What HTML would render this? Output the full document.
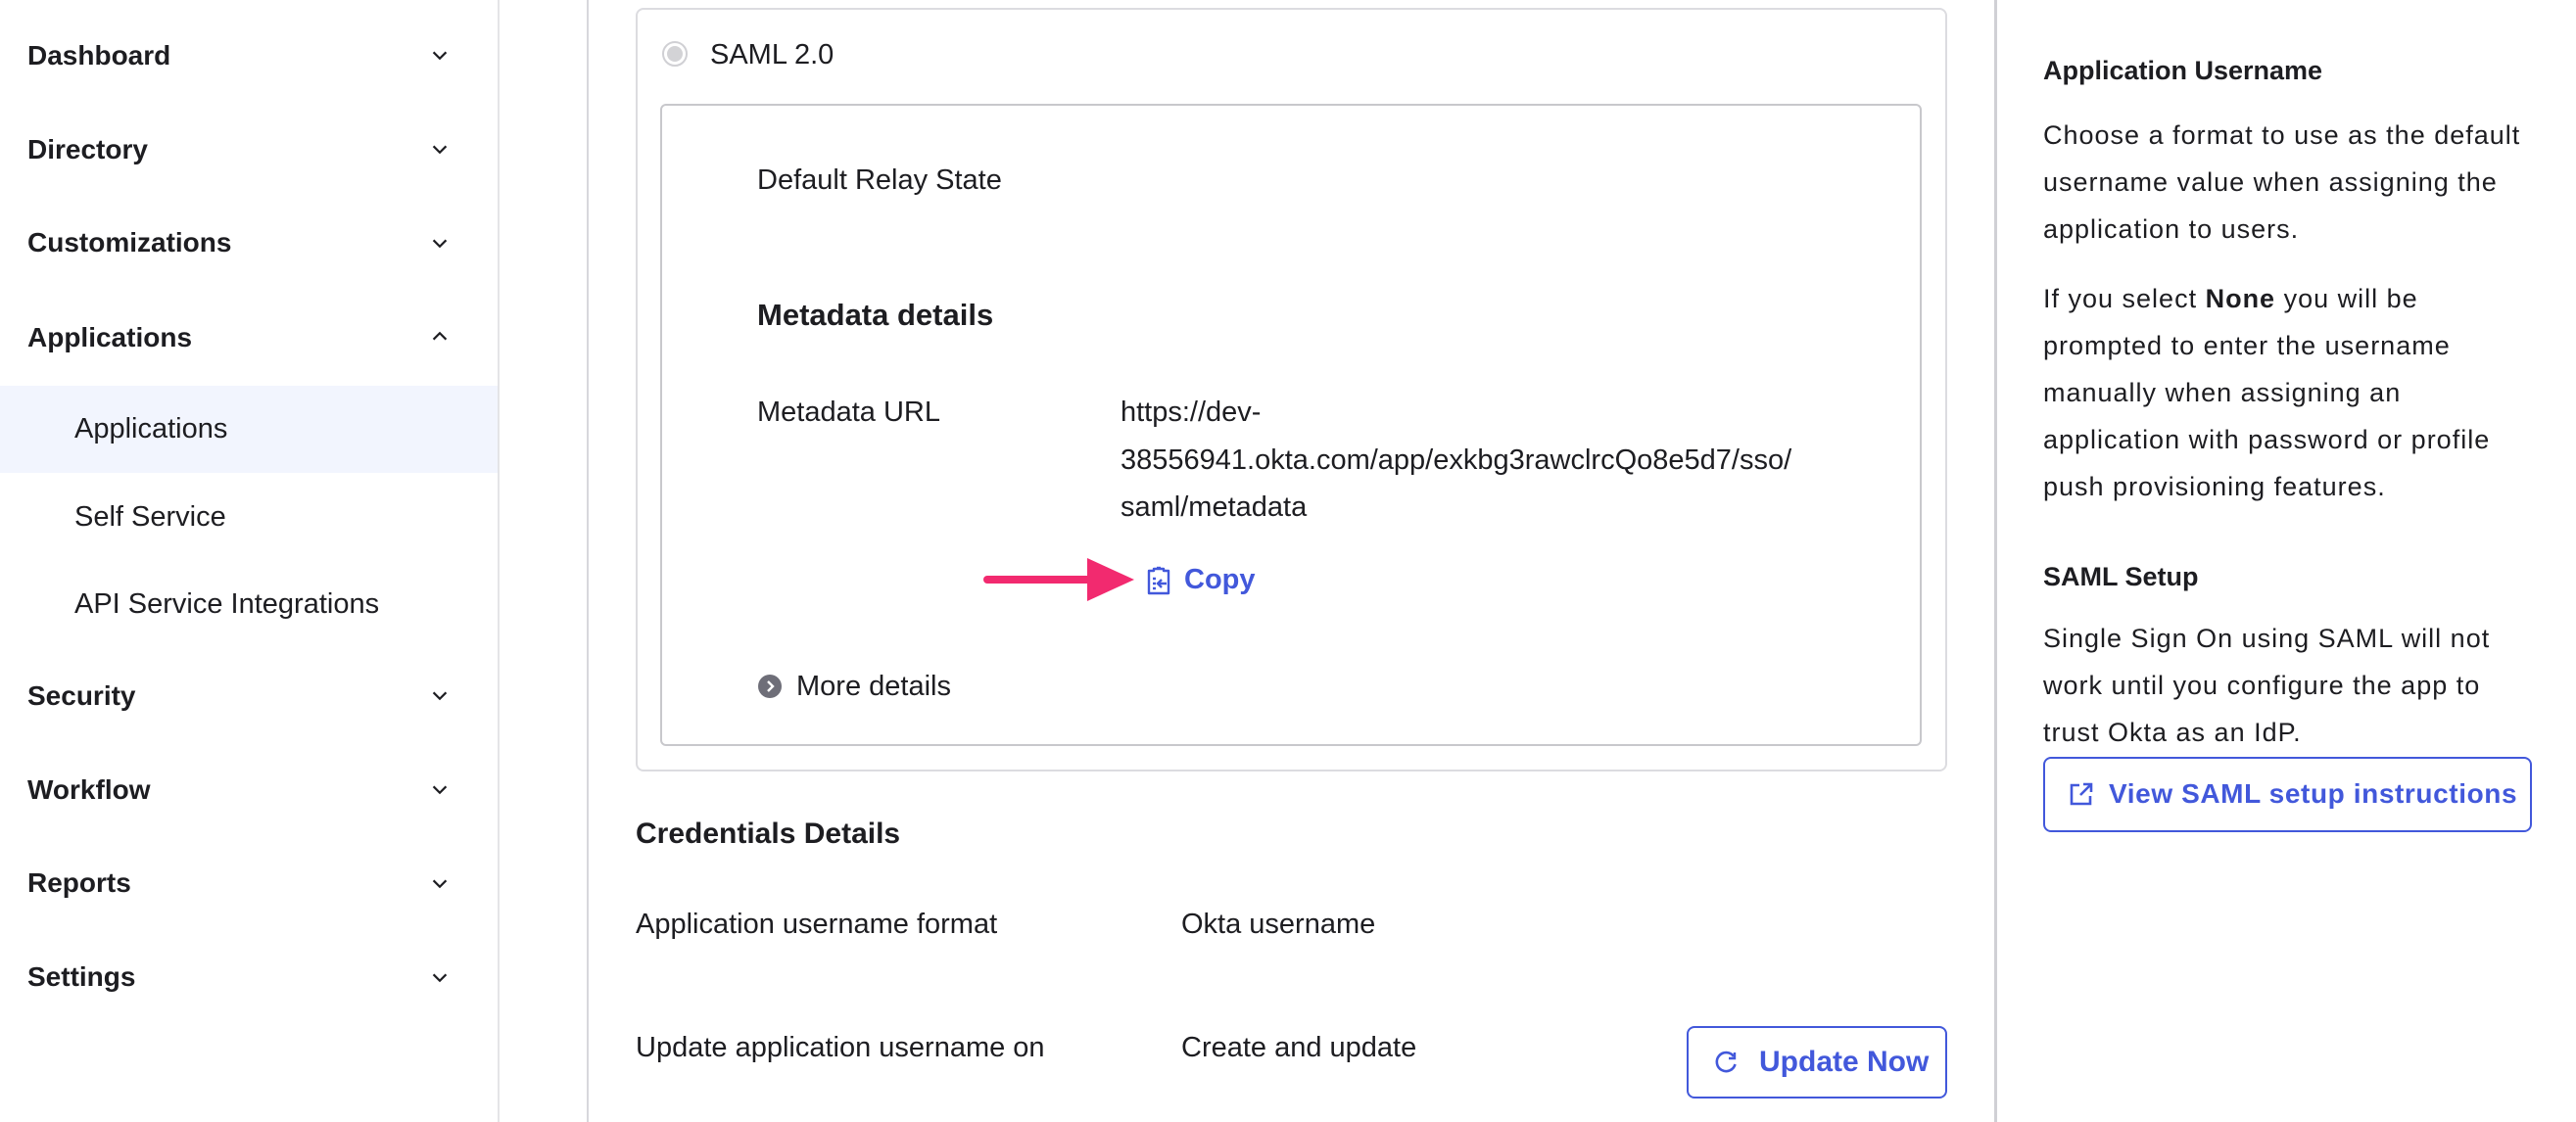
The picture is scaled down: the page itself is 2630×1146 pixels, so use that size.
<!DOCTYPE html>
<html><head><meta charset="utf-8"><style>
*{margin:0;padding:0;box-sizing:border-box}
body{width:2630px;height:1146px;overflow:hidden;background:#fff;font-family:"Liberation Sans",sans-serif;color:#1d1d21;position:relative}
.a{position:absolute;white-space:nowrap}
.nav{left:28px;font-size:28px;font-weight:bold;line-height:40px}
.sub{left:76px;font-size:29px;line-height:40px}
.chev{position:absolute;left:438px;width:22px;height:22px}
.t{font-size:29px;line-height:40px}
.rp{left:2086px;font-size:27px;letter-spacing:1px;line-height:48px}
.rh{left:2086px;font-size:27px;font-weight:bold;line-height:40px}
.blue{color:#4258db}
</style></head><body>
<div class="a" style="left:508px;top:0;width:2px;height:1146px;background:#e4e4e7"></div>
<div class="a" style="left:0;top:394px;width:508px;height:89px;background:#f2f5fe"></div>
<div class="a nav" style="top:37px">Dashboard</div>
<div class="a nav" style="top:133px">Directory</div>
<div class="a nav" style="top:228px">Customizations</div>
<div class="a nav" style="top:325px">Applications</div>
<div class="a sub" style="top:418px">Applications</div>
<div class="a sub" style="top:508px">Self Service</div>
<div class="a sub" style="top:597px">API Service Integrations</div>
<div class="a nav" style="top:691px">Security</div>
<div class="a nav" style="top:787px">Workflow</div>
<div class="a nav" style="top:882px">Reports</div>
<div class="a nav" style="top:978px">Settings</div>
<svg class="chev" style="top:46px" viewBox="0 0 24 24"><path d="M5 8l7 7 7-7" fill="none" stroke="#1d1d21" stroke-width="2.4"/></svg>
<svg class="chev" style="top:142px" viewBox="0 0 24 24"><path d="M5 8l7 7 7-7" fill="none" stroke="#1d1d21" stroke-width="2.4"/></svg>
<svg class="chev" style="top:238px" viewBox="0 0 24 24"><path d="M5 8l7 7 7-7" fill="none" stroke="#1d1d21" stroke-width="2.4"/></svg>
<svg class="chev" style="top:332px" viewBox="0 0 24 24"><path d="M5 16l7-7 7 7" fill="none" stroke="#1d1d21" stroke-width="2.4"/></svg>
<svg class="chev" style="top:700px" viewBox="0 0 24 24"><path d="M5 8l7 7 7-7" fill="none" stroke="#1d1d21" stroke-width="2.4"/></svg>
<svg class="chev" style="top:796px" viewBox="0 0 24 24"><path d="M5 8l7 7 7-7" fill="none" stroke="#1d1d21" stroke-width="2.4"/></svg>
<svg class="chev" style="top:892px" viewBox="0 0 24 24"><path d="M5 8l7 7 7-7" fill="none" stroke="#1d1d21" stroke-width="2.4"/></svg>
<svg class="chev" style="top:988px" viewBox="0 0 24 24"><path d="M5 8l7 7 7-7" fill="none" stroke="#1d1d21" stroke-width="2.4"/></svg>

<div class="a" style="left:599px;top:0;width:2px;height:1146px;background:#d7d7dc"></div>
<div class="a" style="left:649px;top:8px;width:1339px;height:780px;border:2px solid #dcdce0;border-radius:8px"></div>
<svg class="a" style="left:675px;top:41px" width="28" height="28" viewBox="0 0 28 28"><circle cx="14" cy="14" r="12" fill="#fff" stroke="#d0d0d4" stroke-width="2"/><circle cx="14" cy="14" r="8" fill="#d3d3d6"/></svg>
<div class="a t" style="left:725px;top:36px">SAML 2.0</div>
<div class="a" style="left:674px;top:106px;width:1288px;height:656px;border:2px solid #c8c8cc;border-radius:6px"></div>
<div class="a t" style="left:773px;top:164px">Default Relay State</div>
<div class="a t" style="left:773px;top:302px;font-size:31px;font-weight:bold">Metadata details</div>
<div class="a t" style="left:773px;top:401px">Metadata URL</div>
<div class="a t" style="left:1144px;top:401px">https://dev-</div>
<div class="a t" style="left:1144px;top:450px">38556941.okta.com/app/exkbg3rawclrcQo8e5d7/sso/</div>
<div class="a t" style="left:1144px;top:498px">saml/metadata</div>
<svg class="a" style="left:1000px;top:568px" width="160" height="50" viewBox="0 0 160 50"><path d="M8 24H120" stroke="#f22a6f" stroke-width="8" stroke-linecap="round"/><path d="M110 2L158 24L110 46Z" fill="#f22a6f"/></svg>
<svg class="a" style="left:1170px;top:578px" width="26" height="30" viewBox="0 0 26 30"><path d="M3 5h5v-2h10v2h5v23h-20z" fill="none" stroke="#4258db" stroke-width="2.4" stroke-linejoin="round"/><path d="M11 2h4" stroke="#4258db" stroke-width="2.4"/><path d="M7 13h3M7 18h3M7 23h3" stroke="#4258db" stroke-width="2.4"/><path d="M21 18h-8M16 14l-4 4 4 4" fill="none" stroke="#4258db" stroke-width="2.4"/></svg>
<div class="a t blue" style="left:1209px;top:572px;font-weight:bold">Copy</div>
<svg class="a" style="left:773px;top:688px" width="26" height="26" viewBox="0 0 26 26"><circle cx="13" cy="13" r="12" fill="#6e6e78"/><path d="M11 8l5 5-5 5" fill="none" stroke="#fff" stroke-width="2.4"/></svg>
<div class="a t" style="left:813px;top:681px">More details</div>

<div class="a t" style="left:649px;top:832px;font-size:30px;font-weight:bold">Credentials Details</div>
<div class="a t" style="left:649px;top:924px">Application username format</div>
<div class="a t" style="left:1206px;top:924px">Okta username</div>
<div class="a t" style="left:649px;top:1050px">Update application username on</div>
<div class="a t" style="left:1206px;top:1050px">Create and update</div>
<div class="a" style="left:1722px;top:1048px;width:266px;height:74px;border:2px solid #4258db;border-radius:8px"></div>
<svg class="a" style="left:1749px;top:1072px" width="26" height="26" viewBox="0 0 26 26"><path d="M21 7A9.5 9.5 0 1 0 22.5 15" fill="none" stroke="#4258db" stroke-width="2.6"/><path d="M22 3v6h-6" fill="none" stroke="#4258db" stroke-width="2.4"/></svg>
<div class="a blue" style="left:1796px;top:1065px;font-size:30px;font-weight:bold;line-height:40px">Update Now</div>

<div class="a" style="left:2036px;top:0;width:3px;height:1146px;background:#d0d0d5"></div>
<div class="a rh" style="top:52px">Application Username</div>
<div class="a rp" style="top:114px">Choose a format to use as the default<br>username value when assigning the<br>application to users.</div>
<div class="a rp" style="top:281px">If you select <b>None</b> you will be<br>prompted to enter the username<br>manually when assigning an<br>application with password or profile<br>push provisioning features.</div>
<div class="a rh" style="top:569px">SAML Setup</div>
<div class="a rp" style="top:628px">Single Sign On using SAML will not<br>work until you configure the app to<br>trust Okta as an IdP.</div>
<div class="a" style="left:2086px;top:773px;width:499px;height:77px;border:2px solid #4258db;border-radius:8px"></div>
<svg class="a" style="left:2112px;top:798px" width="26" height="26" viewBox="0 0 26 26"><path d="M11 4H3v19h19v-8" fill="none" stroke="#4258db" stroke-width="2.6"/><path d="M15 3h8v8M23 3L12 14" fill="none" stroke="#4258db" stroke-width="2.6"/></svg>
<div class="a blue" style="left:2153px;top:791px;font-size:28px;font-weight:bold;letter-spacing:0.6px;line-height:40px">View SAML setup instructions</div>
</body></html>
